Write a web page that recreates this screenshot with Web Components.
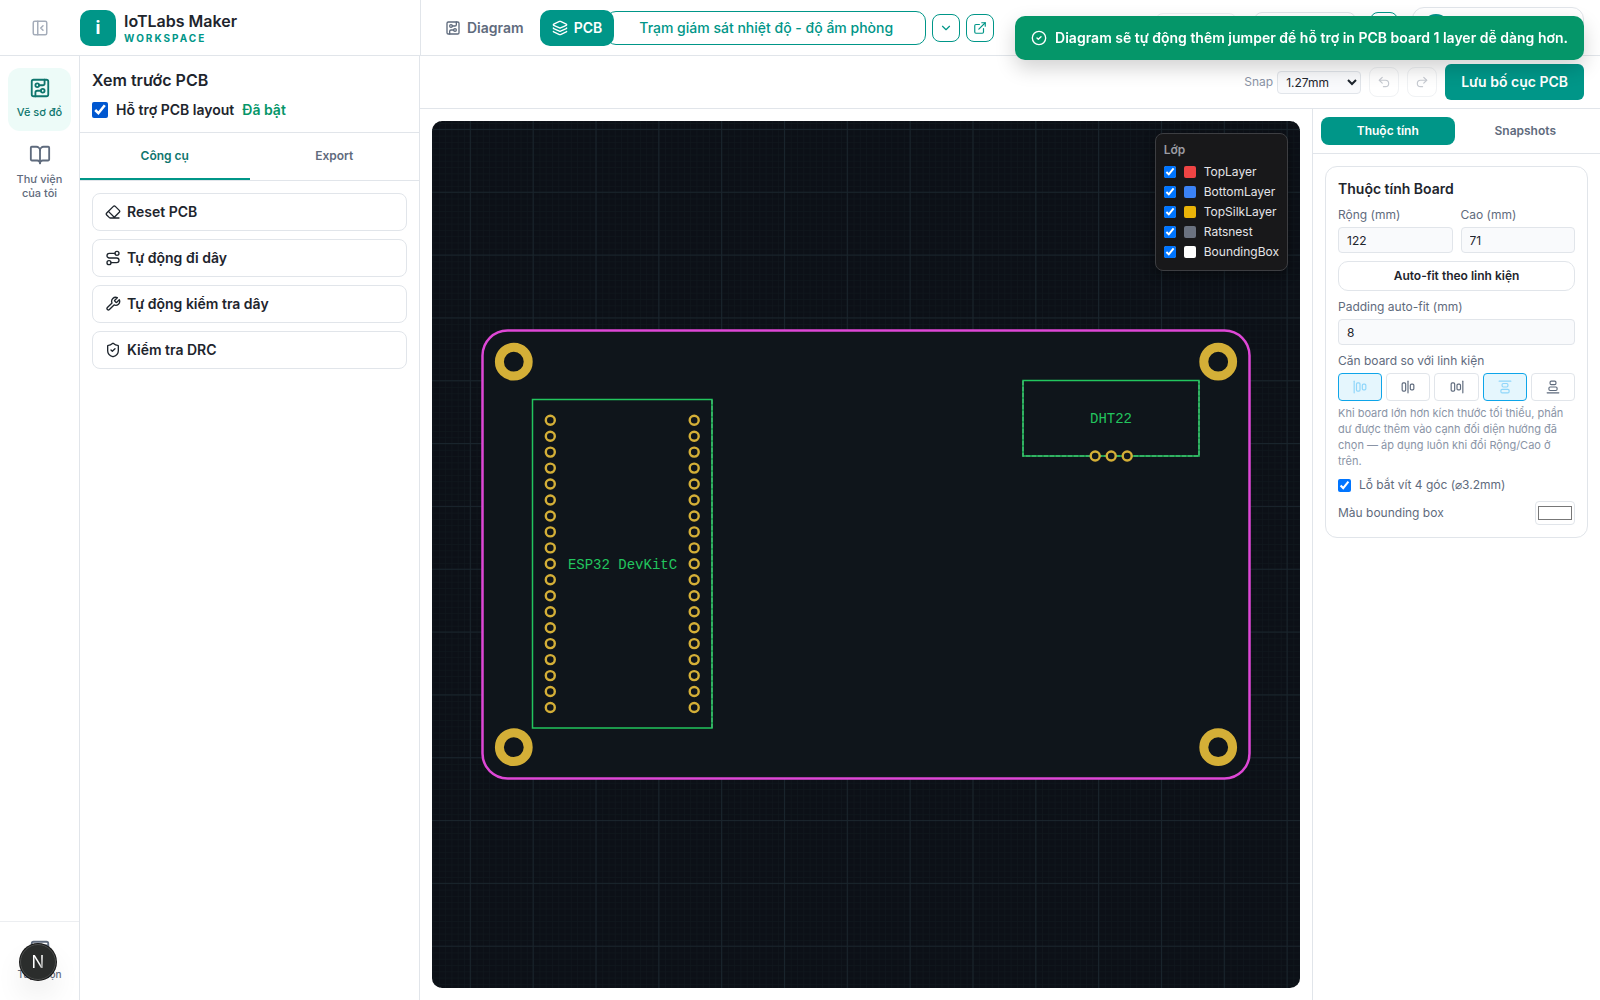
<!DOCTYPE html>
<html lang="vi">
<head>
<meta charset="utf-8">
<meta name="viewport" content="width=device-width, initial-scale=1">
<title>IoTLabs Maker</title>
<style>
  :root {
    --teal: #009688;
    --teal-dark: #0f766e;
    --ink: #1e252d;
    --muted: #5f6b7d;
    --faint: #8a94a6;
    --line: #e1e5ea;
    --field: #f9fafc;
  }
  html, body { height: 100%; }
  body {
    margin: 0;
    font-family: Inter, "Noto Sans", sans-serif;
    font-size: 14px;
    line-height: 20px;
    color: var(--ink);
    background: #fff;
  }
</style>
</head>
<body>
<maker-app></maker-app>

<script>
const ICONS = {
  circuit: '<rect width="18" height="18" x="3" y="3" rx="2"/><path d="M11 9h4a2 2 0 0 0 2-2V3"/><circle cx="9" cy="9" r="2"/><path d="M7 21v-4a2 2 0 0 1 2-2h4"/><circle cx="15" cy="15" r="2"/>',
  book: '<path d="M12 7v14"/><path d="M3 18a1 1 0 0 1-1-1V4a1 1 0 0 1 1-1h5a4 4 0 0 1 4 4 4 4 0 0 1 4-4h5a1 1 0 0 1 1 1v13a1 1 0 0 1-1 1h-6a3 3 0 0 0-3 3 3 3 0 0 0-3-3z"/>',
  layers: '<path d="M12.83 2.18a2 2 0 0 0-1.66 0L2.6 6.08a1 1 0 0 0 0 1.83l8.58 3.91a2 2 0 0 0 1.66 0l8.58-3.9a1 1 0 0 0 0-1.83z"/><path d="M2 12a1 1 0 0 0 .58.91l8.6 3.91a2 2 0 0 0 1.65 0l8.58-3.9A1 1 0 0 0 22 12"/><path d="M2 17a1 1 0 0 0 .58.91l8.6 3.91a2 2 0 0 0 1.65 0l8.58-3.9A1 1 0 0 0 22 17"/>',
  collapse: '<rect width="18" height="18" x="3" y="3" rx="2"/><path d="M9 3v18"/><path d="m16 15-3-3 3-3"/>',
  eraser: '<path d="M21 21H8a2 2 0 0 1-1.42-.587l-3.994-3.999a2 2 0 0 1 0-2.828l10-10a2 2 0 0 1 2.829 0l5.999 6a2 2 0 0 1 0 2.828L12.834 21"/><path d="m5.082 11.09 8.828 8.828"/>',
  route: '<circle cx="6" cy="19" r="3"/><path d="M9 19h8.5a3.5 3.5 0 0 0 0-7h-11a3.5 3.5 0 0 1 0-7H15"/><circle cx="18" cy="5" r="3"/>',
  wrench: '<path d="M14.7 6.3a1 1 0 0 0 0 1.4l1.6 1.6a1 1 0 0 0 1.4 0l3.77-3.77a6 6 0 0 1-7.94 7.94l-6.91 6.91a2.12 2.12 0 0 1-3-3l6.91-6.91a6 6 0 0 1 7.94-7.94l-3.76 3.76z"/>',
  shield: '<path d="M20 13c0 5-3.5 7.5-7.66 8.95a1 1 0 0 1-.67-.01C7.5 20.5 4 18 4 13V6a1 1 0 0 1 1-1c2 0 4.5-1.2 6.24-2.72a1.17 1.17 0 0 1 1.52 0C14.51 3.81 17 5 19 5a1 1 0 0 1 1 1z"/><path d="m9 12 2 2 4-4"/>',
  undo: '<path d="M9 14 4 9l5-5"/><path d="M4 9h10.5a5.5 5.5 0 0 1 5.5 5.5 5.5 5.5 0 0 1-5.5 5.5H11"/>',
  redo: '<path d="m15 14 5-5-5-5"/><path d="M20 9H9.5A5.5 5.5 0 0 0 4 14.5 5.5 5.5 0 0 0 9.5 20H13"/>',
  external: '<path d="M15 3h6v6"/><path d="M10 14 21 3"/><path d="M18 13v6a2 2 0 0 1-2 2H5a2 2 0 0 1-2-2V8a2 2 0 0 1 2-2h6"/>',
  chevron: '<path d="m6 9 6 6 6-6"/>',
  check: '<circle cx="12" cy="12" r="10"/><path d="m9 12 2 2 4-4"/>',
  options: '<rect width="18" height="18" x="3" y="3" rx="2"/><path d="M3 7h18"/>',
  hStart: '<rect width="6" height="14" x="6" y="5" rx="2"/><rect width="6" height="10" x="16" y="7" rx="2"/><path d="M2 2v20"/>',
  hCenter: '<rect width="6" height="14" x="2" y="5" rx="2"/><rect width="6" height="10" x="16" y="7" rx="2"/><path d="M12 2v20"/>',
  hEnd: '<rect width="6" height="14" x="2" y="5" rx="2"/><rect width="6" height="10" x="12" y="7" rx="2"/><path d="M22 2v20"/>',
  vStart: '<rect width="14" height="6" x="5" y="16" rx="2"/><rect width="10" height="6" x="7" y="6" rx="2"/><path d="M2 2h20"/>',
  vEnd: '<rect width="14" height="6" x="5" y="12" rx="2"/><rect width="10" height="6" x="7" y="2" rx="2"/><path d="M2 22h20"/>'
};

const BASE = `
  *, *::before, *::after { box-sizing: border-box; }
  button, input, select { font: inherit; color: inherit; margin: 0; }
  button { cursor: pointer; padding: 0; border: 0; background: none; }
  input[type=checkbox] { flex: none; }
`;

function define(name, html) {
  customElements.define(name, class extends HTMLElement {
    constructor() {
      super();
      const t = document.createElement('template');
      const body = typeof html === 'function' ? html(this) : html;
      t.innerHTML = '<style>' + BASE + '</style>' + body;
      this.attachShadow({ mode: 'open' }).append(t.content.cloneNode(true));
    }
  });
}

customElements.define('ui-icon', class extends HTMLElement {
  connectedCallback() {
    if (this.shadowRoot) return;
    const s = this.getAttribute('size') || 16;
    this.attachShadow({ mode: 'open' }).innerHTML = `
      <style>:host{display:inline-flex;flex:none} svg{display:block}</style>
      <svg width="${s}" height="${s}" viewBox="0 0 24 24" fill="none" stroke="currentColor"
        stroke-width="${this.getAttribute('weight') || 2}" stroke-linecap="round" stroke-linejoin="round"
        aria-hidden="true">${ICONS[this.getAttribute('name')]}</svg>`;
  }
});

define('app-header', `
  <style>
    :host { display: flex; height: 56px; border-bottom: 1px solid var(--line); background: #fff; }
    .brand { width: 421px; flex: none; display: flex; align-items: center; border-right: 1px solid var(--line); }
    .fold { width: 80px; height: 36px; display: flex; align-items: center; justify-content: center; color: #a5adba; }
    .logo { width: 36px; height: 36px; border-radius: 10px; background: var(--teal); color: #fff;
      font-size: 18px; font-weight: 700; display: flex; align-items: center; justify-content: center; }
    .name { margin-left: 8px; display: flex; flex-direction: column; }
    .name b { font-size: 16px; font-weight: 600; line-height: 20px; }
    .name span { font-size: 10px; font-weight: 700; line-height: 14px; letter-spacing: 2px; color: var(--teal); }
    .bar { flex: 1; min-width: 0; display: flex; align-items: center; padding: 0 16px 0 12px; }
    .tab { height: 36px; padding: 0 12px; display: flex; align-items: center; gap: 6px; border-radius: 10px;
      font-weight: 600; color: var(--muted); }
    .tab + .tab { margin-left: 4px; }
    .tab.on { background: var(--teal); color: #fff; z-index: 1; }
    .project { display: flex; align-items: center; gap: 6px; margin-left: -8px; color: var(--teal); }
    .project input { width: 320px; height: 34px; border: 1px solid var(--teal); border-radius: 10px; background: #fff;
      padding: 0 12px; text-align: center; font-weight: 500; outline: 0; }
    .sq { width: 28px; height: 28px; border: 1px solid var(--teal); border-radius: 8px;
      display: flex; align-items: center; justify-content: center; color: var(--teal); }
    .right { margin-left: auto; display: flex; align-items: center; gap: 14px; }
    .ghost { width: 82px; height: 30px; border: 1px solid #eff1f4; border-radius: 8px; }
    .ghost.wide { width: 102px; height: 32px; border-color: var(--line); margin-left: 3px; }
    .sq.tall { height: 32px; }
    .user { width: 172px; height: 42px; border: 1px solid var(--line); border-radius: 12px;
      display: flex; align-items: center; padding: 0 9px; }
    .user i { width: 28px; height: 28px; border-radius: 50%; background: var(--teal); }
  </style>
  <div class="brand">
    <button class="fold" aria-label="Thu gọn"><ui-icon name="collapse" size="18"></ui-icon></button>
    <div class="logo">i</div>
    <div class="name"><b>IoTLabs Maker</b><span>WORKSPACE</span></div>
  </div>
  <div class="bar">
    <button class="tab"><ui-icon name="circuit" size="16"></ui-icon>Diagram</button>
    <button class="tab on"><ui-icon name="layers" size="16"></ui-icon>PCB</button>
    <div class="project">
      <input type="text" aria-label="Dự án" value="Trạm giám sát nhiệt độ - độ ẩm phòng">
      <button class="sq" aria-label="Chọn dự án"><ui-icon name="chevron" size="14"></ui-icon></button>
      <button class="sq" aria-label="Mở dự án"><ui-icon name="external" size="14"></ui-icon></button>
    </div>
    <div class="right">
      <button class="ghost" aria-label="Chia sẻ"></button>
      <button class="ghost wide" aria-label="Lưu"></button>
      <button class="sq tall" aria-label="Thêm"></button>
      <button class="user" aria-label="Tài khoản"><i></i></button>
    </div>
  </div>`);

define('nav-rail', `
  <style>
    :host { display: flex; flex-direction: column; width: 80px; flex: none; border-right: 1px solid var(--line); }
    nav { flex: 1; padding: 12px 8px; display: flex; flex-direction: column; gap: 4px; }
    a { min-height: 63px; padding: 9px 4px; display: flex; flex-direction: column; align-items: center; gap: 6px;
      border-radius: 12px; font-size: 11px; line-height: 14px; font-weight: 500; text-align: center;
      color: var(--muted); text-decoration: none; }
    a.on { background: #edfbf8; color: var(--teal-dark); }
    footer { border-top: 1px solid #eceef1; padding: 8px 8px 7px; }
    footer a { font-size: 10px; }
  </style>
  <nav>
    <a class="on" href="#diagram"><ui-icon name="circuit" size="22"></ui-icon>Vẽ sơ đồ</a>
    <a href="#library"><ui-icon name="book" size="22"></ui-icon>Thư viện của tôi</a>
  </nav>
  <footer><a href="#options"><ui-icon name="options" size="22"></ui-icon>Tùy chọn</a></footer>`);

define('tool-button', `
  <style>
    :host { display: block; }
    button { width: 100%; height: 38px; padding: 0 12px; display: flex; align-items: center; gap: 6px;
      border: 1px solid var(--line); border-radius: 8px; background: #fff; font-weight: 600; }
  </style>
  <button><slot name="icon"></slot><slot></slot></button>`);

define('tool-sidebar', `
  <style>
    :host { display: block; width: 340px; flex: none; border-right: 1px solid var(--line); }
    header { padding: 12px; border-bottom: 1px solid var(--line); }
    h2 { margin: 0 0 8px; font-size: 16px; line-height: 24px; font-weight: 600; }
    .row { display: flex; align-items: center; gap: 8px; font-weight: 600; }
    .row label { display: flex; align-items: center; gap: 8px; }
    .row input { width: 16px; height: 16px; accent-color: #0057d0; }
    .row span { color: #059669; }
    .tabs { display: flex; height: 48px; border-bottom: 1px solid var(--line); }
    .tabs button { flex: 1; font-size: 12px; font-weight: 600; color: var(--muted); border-bottom: 2px solid transparent; }
    .tabs .on { color: var(--teal-dark); border-color: var(--teal); }
    .list { padding: 12px; display: flex; flex-direction: column; gap: 8px; }
  </style>
  <header>
    <h2>Xem trước PCB</h2>
    <div class="row"><label><input type="checkbox" checked>Hỗ trợ PCB layout</label><span>Đã bật</span></div>
  </header>
  <div class="tabs"><button class="on">Công cụ</button><button>Export</button></div>
  <div class="list">
    <tool-button><ui-icon slot="icon" name="eraser"></ui-icon>Reset PCB</tool-button>
    <tool-button><ui-icon slot="icon" name="route"></ui-icon>Tự động đi dây</tool-button>
    <tool-button><ui-icon slot="icon" name="wrench"></ui-icon>Tự động kiểm tra dây</tool-button>
    <tool-button><ui-icon slot="icon" name="shield"></ui-icon>Kiểm tra DRC</tool-button>
  </div>`);

define('pcb-toolbar', `
  <style>
    :host { display: flex; align-items: center; justify-content: flex-end; gap: 8px; height: 53px; padding: 0 16px;
      border-bottom: 1px solid var(--line); }
    label { display: flex; align-items: center; gap: 4px; font-size: 12px; color: var(--faint); }
    select { width: 84px; height: 23px; padding: 0 4px; border: 1px solid var(--line); border-radius: 4px;
      background: var(--field); color: var(--ink); }
    .sq { width: 30px; height: 30px; border: 1px solid #f0f2f4; border-radius: 8px; color: #c6cad1;
      display: flex; align-items: center; justify-content: center; }
    .save { height: 36px; padding: 0 16px; border-radius: 6px; background: var(--teal); color: #fff; font-weight: 600; }
  </style>
  <label>Snap <select><option>1.27mm</option><option>2.54mm</option></select></label>
  <button class="sq" disabled aria-label="Hoàn tác"><ui-icon name="undo" size="14"></ui-icon></button>
  <button class="sq" disabled aria-label="Làm lại"><ui-icon name="redo" size="14"></ui-icon></button>
  <button class="save">Lưu bố cục PCB</button>`);

define('layer-panel', () => {
  const rows = [['TopLayer', '#ef4444'], ['BottomLayer', '#3b82f6'], ['TopSilkLayer', '#eab308'],
    ['Ratsnest', '#6b7280'], ['BoundingBox', '#ffffff']];
  return `
  <style>
    :host { display: block; padding: 8px; border: 1px solid #3d3e42; border-radius: 8px; background: #18181a;
      font-size: 12px; color: #e4e4e7; box-shadow: 0 4px 12px #0006; }
    h3 { margin: 0 0 4px; font-size: 12px; line-height: 16px; font-weight: 600; color: #9b9ca3; }
    label { display: flex; align-items: center; gap: 8px; height: 20px; }
    input { width: 12px; height: 12px; accent-color: #0075ff; }
    i { width: 12px; height: 12px; border-radius: 2px; }
  </style>
  <h3>Lớp</h3>` + rows.map(([n, c]) =>
    `<label><input type="checkbox" checked><i style="background:${c}"></i>${n}</label>`).join('');
});

define('pcb-canvas', () => {
  const pad = (x, y) => `<circle cx="${x}" cy="${y}" r="4.5"/>`;
  let pads = '';
  for (let i = 0; i < 19; i++) {
    const y = (299.2 + i * 15.96).toFixed(1);
    pads += pad(118.3, y) + pad(262.2, y);
  }
  [663.2, 679.2, 695.2].forEach(x => { pads += pad(x, 335); });
  const holes = [[81.8, 240.7], [786.2, 240.7], [81.8, 626.2], [786.2, 626.2]]
    .map(([x, y]) => `<circle cx="${x}" cy="${y}" r="14.4"/>`).join('');
  return `
  <style>
    :host { display: block; position: relative; flex: 1; min-width: 0; margin: 12px; border-radius: 10px;
      overflow: hidden; background: #0c1017; }
    svg { display: block; width: 100%; height: 100%; }
    text { font-family: "Courier New", "Liberation Mono", monospace; font-size: 14px; fill: #22c55e; text-anchor: middle; }
    layer-panel { position: absolute; top: 12px; right: 12px; }
  </style>
  <svg viewBox="0 0 868 867" preserveAspectRatio="xMidYMid slice">
    <defs>
      <pattern id="minor" width="6.283" height="6.283" patternUnits="userSpaceOnUse" x="38.3" y="8.4">
        <path d="M0 0H6.283M0 0V6.283" stroke="#10171d" stroke-width="1.4" fill="none"/>
      </pattern>
      <pattern id="major" width="62.83" height="62.83" patternUnits="userSpaceOnUse" x="37.8" y="7.9">
        <path d="M0 .5H62.83M.5 0V62.83" stroke="#1a252d" stroke-width="1" fill="none"/>
      </pattern>
    </defs>
    <rect width="868" height="867" fill="url(#minor)"/>
    <rect width="868" height="867" fill="url(#major)"/>
    <rect x="50.5" y="209.5" width="767" height="448" rx="25" fill="#0f151b" stroke="#de47d6" stroke-width="2.5"/>
    <g fill="none" stroke="#d4af37" stroke-width="9">${holes}</g>
    <g fill="none" stroke="#22c55e" stroke-width="1.5">
      <rect x="100.5" y="278.5" width="179.5" height="328.5"/>
      <rect x="591" y="259.5" width="176" height="75.5"/>
      <g stroke="#3cb86c" stroke-dasharray="4 2"><path d="M280 279V607"/><path d="M591 260V335H767V260"/></g>
    </g>
    <g fill="#0f151b" stroke="#d4af37" stroke-width="2.4">${pads}</g>
    <text x="190.5" y="448">ESP32 DevKitC</text>
    <text x="679" y="302">DHT22</text>
  </svg>
  <layer-panel></layer-panel>`;
});

define('board-inspector', `
  <style>
    :host { display: block; width: 288px; flex: none; border-left: 1px solid var(--line); font-size: 12px; line-height: 16px; color: var(--muted); }
    .tabs { display: flex; gap: 4px; padding: 8px; border-bottom: 1px solid var(--line); }
    .tabs button { flex: 1; height: 28px; border-radius: 8px; font-weight: 600; }
    .tabs .on { background: var(--teal); color: #fff; }
    .card { margin: 12px; padding: 12px; border: 1px solid var(--line); border-radius: 12px;
      display: flex; flex-direction: column; gap: 8px; }
    h3 { margin: 0; font-size: 14px; line-height: 20px; font-weight: 600; color: var(--ink); }
    .pair { display: flex; gap: 8px; }
    .field { flex: 1; min-width: 0; display: flex; flex-direction: column; gap: 4px; }
    .field input { width: 100%; height: 26px; padding: 0 8px; border: 1px solid var(--line); border-radius: 4px;
      background: var(--field); color: var(--ink); }
    .fit { height: 30px; border: 1px solid var(--line); border-radius: 10px; font-weight: 600; color: var(--ink); }
    .align { display: flex; gap: 4px; }
    .align button { flex: 1; height: 28px; border: 1px solid var(--line); border-radius: 4px;
      display: flex; align-items: center; justify-content: center; }
    .align .on { border-color: #0ea5e9; background: #e5f6fd; color: #8fd6fa; }
    p { margin: 0; font-size: 11px; color: var(--faint); }
    .tick { display: flex; align-items: center; gap: 8px; }
    .tick input { width: 13px; height: 13px; accent-color: #0075ff; }
    .color { display: flex; align-items: center; justify-content: space-between; }
    .color input { width: 40px; height: 24px; padding: 0; border: 1px solid var(--line); border-radius: 4px; background: #fff; }
  </style>
  <div class="tabs"><button class="on">Thuộc tính</button><button>Snapshots</button></div>
  <section class="card">
    <h3>Thuộc tính Board</h3>
    <div class="pair">
      <label class="field">Rộng (mm)<input type="number" value="122"></label>
      <label class="field">Cao (mm)<input type="number" value="71"></label>
    </div>
    <button class="fit">Auto-fit theo linh kiện</button>
    <label class="field">Padding auto-fit (mm)<input type="number" value="8"></label>
    <div class="field">
      <span>Căn board so với linh kiện</span>
      <div class="align">
        <button class="on" aria-label="Trái"><ui-icon name="hStart" size="14"></ui-icon></button>
        <button aria-label="Giữa"><ui-icon name="hCenter" size="14"></ui-icon></button>
        <button aria-label="Phải"><ui-icon name="hEnd" size="14"></ui-icon></button>
        <button class="on" aria-label="Trên"><ui-icon name="vStart" size="14"></ui-icon></button>
        <button aria-label="Dưới"><ui-icon name="vEnd" size="14"></ui-icon></button>
      </div>
      <p>Khi board lớn hơn kích thước tối thiểu, phần dư được thêm vào cạnh đối diện hướng đã chọn — áp dụng luôn khi đổi Rộng/Cao ở trên.</p>
    </div>
    <label class="tick"><input type="checkbox" checked>Lỗ bắt vít 4 góc (⌀3.2mm)</label>
    <label class="color">Màu bounding box<input type="color" value="#ffffff"></label>
  </section>`);

define('toast-note', `
  <style>
    :host { position: fixed; z-index: 5; top: 16px; right: 16px; height: 44px; padding: 0 16px; display: flex;
      align-items: center; gap: 8px; border-radius: 10px; background: #059669; color: #fff; font-weight: 600;
      box-shadow: 0 8px 20px #0000002e; }
  </style>
  <ui-icon name="check" size="16"></ui-icon><slot></slot>`);

define('dev-badge', `
  <style>
    :host { position: fixed; z-index: 5; left: 20px; bottom: 20px; width: 36px; height: 36px; border-radius: 50%;
      background: #2b2d2c; color: #fff; display: flex; align-items: center; justify-content: center;
      font-size: 17px; line-height: 20px; border: 1px solid #4a4c4b;
      box-shadow: 0 0 0 1px #171717, 0 16px 32px -8px #0000003d; }
    span { background: linear-gradient(110deg, #fff 60%, #ffffff40); -webkit-background-clip: text; color: transparent; }
  </style>
  <span>N</span>`);

define('maker-app', `
  <style>
    :host { display: flex; flex-direction: column; height: 100vh; }
    .body { flex: 1; min-height: 0; display: flex; }
    main { flex: 1; min-width: 0; display: flex; flex-direction: column; }
    .work { flex: 1; min-height: 0; display: flex; }
  </style>
  <app-header></app-header>
  <div class="body">
    <nav-rail></nav-rail>
    <tool-sidebar></tool-sidebar>
    <main>
      <pcb-toolbar></pcb-toolbar>
      <div class="work"><pcb-canvas></pcb-canvas><board-inspector></board-inspector></div>
    </main>
  </div>
  <toast-note>Diagram sẽ tự động thêm jumper để hỗ trợ in PCB board 1 layer dễ dàng hơn.</toast-note>
  <dev-badge></dev-badge>`);
</script>
</body>
</html>
